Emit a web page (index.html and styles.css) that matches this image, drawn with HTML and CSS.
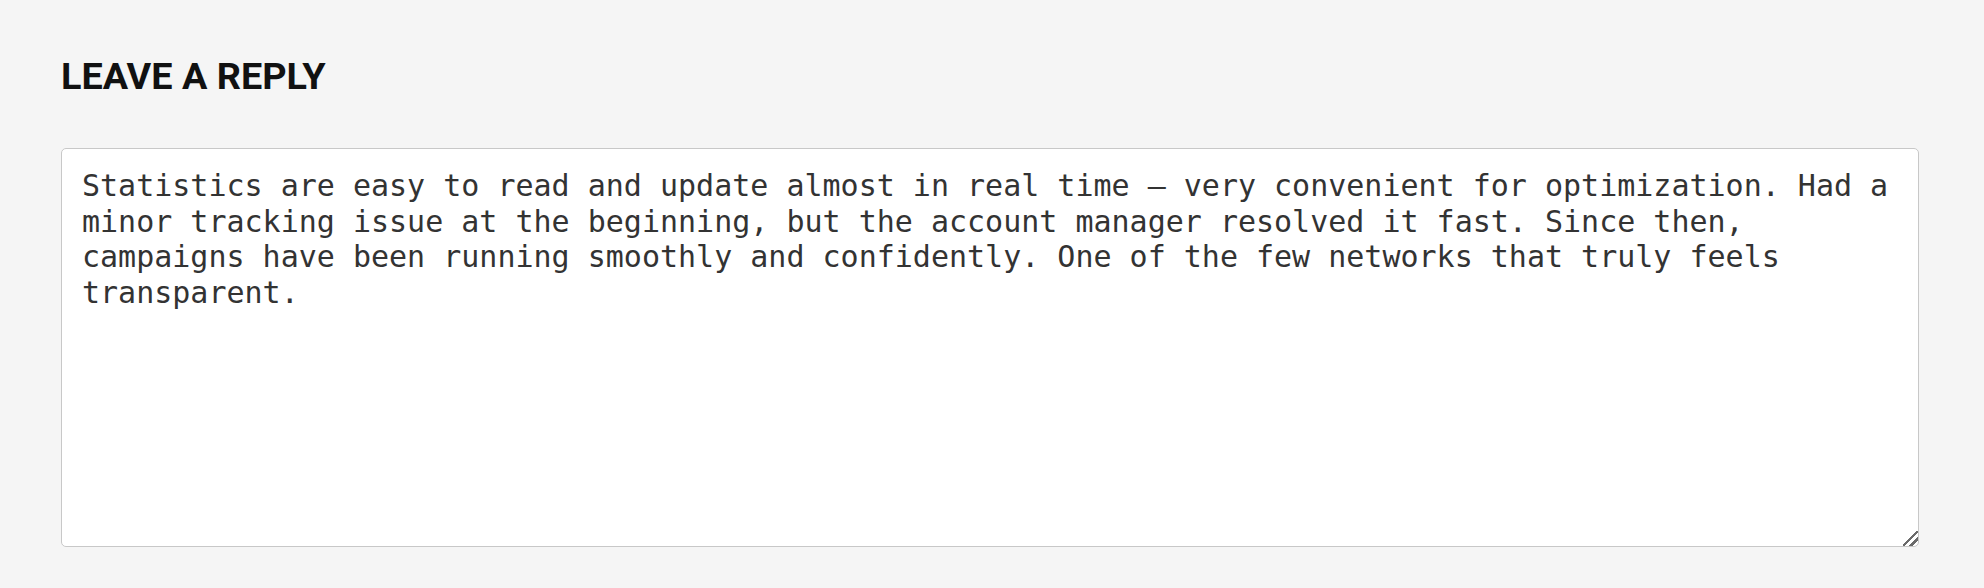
FILE: index.html
```html
<!DOCTYPE html>
<html lang="en">
<head>
<meta charset="utf-8">
<title>Leave a Reply</title>
<link rel="stylesheet" href="styles.css">
</head>
<body>
<section class="reply">
  <h3 class="reply-title">LEAVE A REPLY</h3>
  <textarea class="reply-text" name="comment">Statistics are easy to read and update almost in real time — very convenient for optimization. Had a minor tracking issue at the beginning, but the account manager resolved it fast. Since then, campaigns have been running smoothly and confidently. One of the few networks that truly feels transparent.</textarea>
</section>
</body>
</html>
```

FILE: styles.css
```css
html, body {
  margin: 0;
  padding: 0;
  background: #f5f5f5;
}

.reply {
  padding: 55px 65px 0 61px;
  display: flex;
  flex-direction: column;
  gap: 50px;
}

.reply-title {
  margin: 0;
  font-family: Roboto, "Liberation Sans", sans-serif;
  font-weight: 700;
  font-size: 37.8px;
  line-height: 43px;
  color: #111111;
  letter-spacing: 0;
}

.reply-text {
  box-sizing: border-box;
  width: 100%;
  height: 399px;
  margin: 0;
  padding: 19px 20px 16px;
  border: 1.5px solid #c8c8c8;
  border-radius: 5px;
  background: #ffffff;
  font-family: "DejaVu Sans Mono", monospace;
  font-size: 30px;
  line-height: 35.5px;
  color: #333333;
  outline: none;
}

.reply-text::-webkit-resizer {
  background:
    linear-gradient(135deg,
      transparent 0 44%,
      #6a6a6a 44% 55%,
      transparent 55% 70%,
      #6a6a6a 70% 81%,
      transparent 81%);
}
```
